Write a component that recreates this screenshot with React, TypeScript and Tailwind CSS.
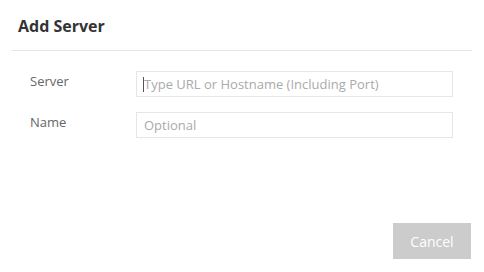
const Field = ({ label, placeholder, caret }: { label: string; placeholder: string; caret?: boolean }) => (
  <div className="flex items-start">
    <label className="w-[136px] pl-[30px] text-[13px] leading-5 text-[#666]">{label}</label>
    <div className="relative">
      <input
        placeholder={placeholder}
        className="w-[317px] h-[26px] border border-[#e6e6e6] px-[7px] text-[13px] text-[#333] placeholder:text-[#aaa] outline-none"
      />
      {caret && <span className="absolute left-[7px] top-[6px] w-px h-[15px] bg-[#555]" />}
    </div>
  </div>
);

export default function App() {
  return (
    <div className="w-[484px] h-[272px] bg-white flex flex-col" style={{ fontFamily: '"Open Sans", sans-serif' }}>
      <div className="mx-3 pt-[14px] pb-[12px] border-b border-[#e5e5e5]">
        <h1 className="pl-[6px] text-[16px] leading-6 font-bold text-[#333]">Add Server</h1>
      </div>
      <div className="flex flex-col gap-[15px] pt-5">
        <Field label="Server" placeholder="Type URL or Hostname (Including Port)" caret />
        <Field label="Name" placeholder="Optional" />
      </div>
      <div className="mt-auto flex justify-end pr-[13px] pb-[13px]">
        <button className="w-[78px] h-9 bg-[#cccccc] text-white text-[14px]">Cancel</button>
      </div>
    </div>
  );
}
